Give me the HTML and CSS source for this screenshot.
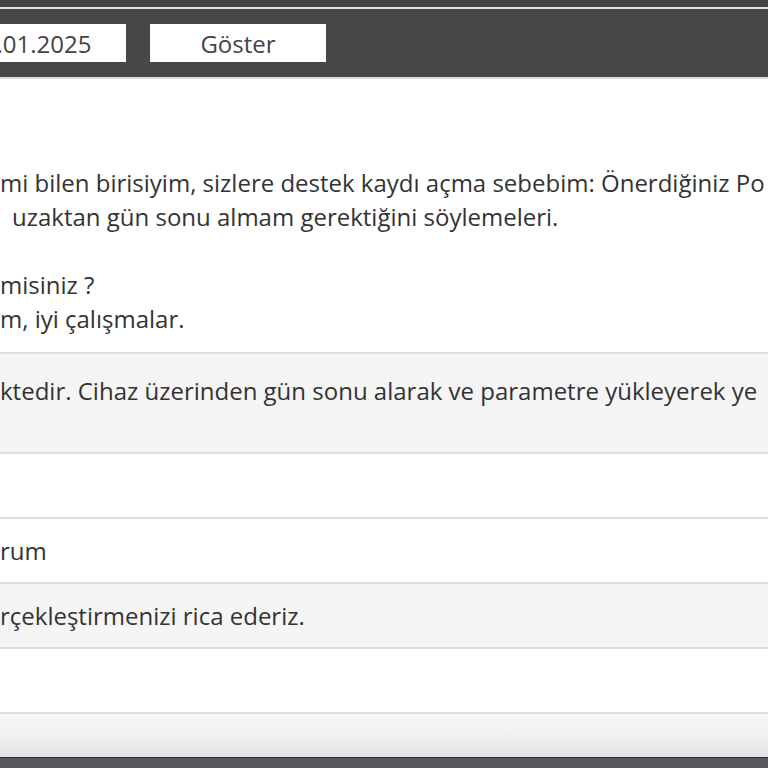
FILE: index.html
```html
<!DOCTYPE html>
<html lang="tr">
<head>
    <meta charset="UTF-8">
    <meta name="viewport" content="width=device-width, initial-scale=1.0">
    <title>Destek Kaydı</title>
    <link rel="stylesheet" href="styles.css">
</head>
<body>
    <div class="top-strip"></div>

    <div class="toolbar">
        <input class="date-input" type="text" value="15.01.2025">
        <button class="show-btn">Göster</button>
    </div>

    <div class="message">
        <p class="line">mi bilen birisiyim, sizlere destek kaydı açma sebebim: Önerdiğiniz Po</p>
        <p class="line indent">uzaktan gün sonu almam gerektiğini söylemeleri.</p>
        <p class="line">&nbsp;</p>
        <p class="line">misiniz ?</p>
        <p class="line">m, iyi çalışmalar.</p>
    </div>

    <div class="replies">
        <div class="reply alt tall">ktedir. Cihaz üzerinden gün sonu alarak ve parametre yükleyerek ye</div>
        <div class="reply"></div>
        <div class="reply">rum</div>
        <div class="reply alt">rçekleştirmenizi rica ederiz.</div>
        <div class="reply"></div>
    </div>

    <div class="footer-bar"></div>
    <div class="bottom-strip"></div>
</body>
</html>
```

FILE: styles.css
```css
body {
    margin: 0;
    padding: 0;
    width: 768px;
    height: 768px;
    overflow: hidden;
    background: #fff;
    font-family: 'Open Sans', 'Noto Sans', sans-serif;
    color: #333;
}

.top-strip {
    height: 7px;
    background: #444;
    border-bottom: 2px solid #e2e2e2;
}

.toolbar {
    height: 68px;
    background: #474747;
    border-bottom: 2px solid #dcdcdc;
    display: flex;
    align-items: center;
    gap: 24px;
    white-space: nowrap;
}

.date-input {
    width: 169px;
    height: 38px;
    margin-left: -43px;
    box-sizing: border-box;
    padding: 0 0 0 12px;
    border: none;
    background: #fff;
    font-family: inherit;
    font-size: 24px;
    color: #444;
    outline: none;
}

.show-btn {
    width: 176px;
    height: 38px;
    border: none;
    background: #fff;
    font-family: inherit;
    font-size: 24px;
    color: #444;
    padding: 0;
}

.message {
    padding-top: 87px;
    padding-bottom: 16px;
}

.line {
    margin: 0;
    font-size: 24px;
    line-height: 34px;
    white-space: nowrap;
    overflow: hidden;
}

.indent {
    padding-left: 12px;
}

.replies {
    border-top: 2px solid #dedede;
}

.reply {
    height: 63px;
    font-size: 24px;
    line-height: 34px;
    white-space: nowrap;
    overflow: hidden;
    border-bottom: 2px solid #dedede;
    display: flex;
    align-items: center;
    background: #fff;
}

.reply.alt {
    background: #f5f5f5;
}

.reply.tall {
    height: 78px;
    padding-top: 20px;
    align-items: flex-start;
}

.footer-bar {
    height: 43px;
    background: linear-gradient(to bottom, #f7f7f7 0%, #eeeeee 60%, #e4e4e4 100%);
    border-bottom: 1px solid #2e2e2e;
}

.bottom-strip {
    height: 12px;
    background: #58585c;
}
```
